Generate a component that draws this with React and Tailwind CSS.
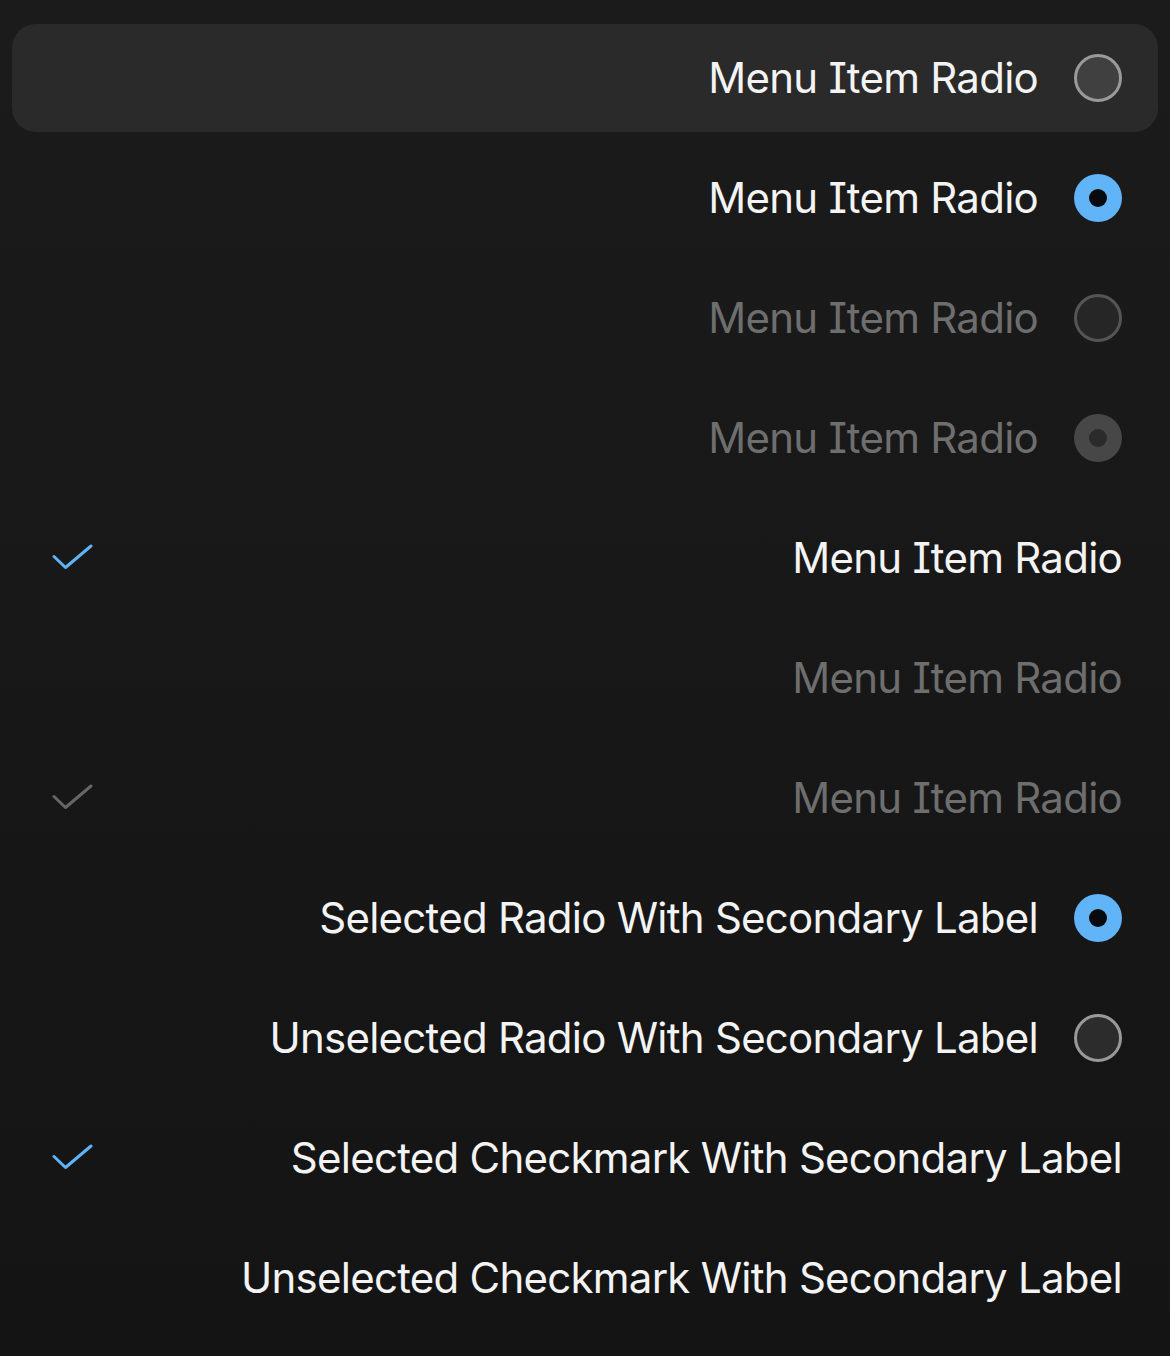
import { useState } from 'react';

// Radio indicator, 48px circle on the right side of a row
function Radio({ checked, disabled, hovered }) {
  if (checked) {
    return (
      <span
        className={`flex h-12 w-12 shrink-0 items-center justify-center rounded-full ${
          disabled ? 'bg-[#474747]' : 'bg-[#62b4f8]'
        }`}
      >
        <span className={`h-[18px] w-[18px] rounded-full ${disabled ? 'bg-[#2b2b2b]' : 'bg-[#070b10]'}`} />
      </span>
    );
  }
  return (
    <span
      className={`h-12 w-12 shrink-0 rounded-full border-[3px] ${
        disabled
          ? 'border-[#555555] bg-[#262626]'
          : hovered
          ? 'border-[#9a9a9a] bg-[#404040]'
          : 'border-[#999999] bg-[#2c2c2c]'
      }`}
    />
  );
}

function Check({ disabled }) {
  return (
    <svg width="42" height="28" viewBox="0 0 42 28" fill="none" className="shrink-0">
      <path
        d="M2 12.5 L13.5 23.5 L39 2"
        stroke={disabled ? '#666666' : '#5fb3f6'}
        strokeWidth="3"
        strokeLinecap="round"
        strokeLinejoin="round"
      />
    </svg>
  );
}

const items = [
  { label: 'Menu Item Radio', kind: 'radio', hovered: true },
  { label: 'Menu Item Radio', kind: 'radio', checked: true },
  { label: 'Menu Item Radio', kind: 'radio', disabled: true },
  { label: 'Menu Item Radio', kind: 'radio', checked: true, disabled: true },
  { label: 'Menu Item Radio', kind: 'check', checked: true },
  { label: 'Menu Item Radio', kind: 'check', disabled: true },
  { label: 'Menu Item Radio', kind: 'check', checked: true, disabled: true },
  { label: 'Selected Radio With Secondary Label', kind: 'radio', checked: true },
  { label: 'Unselected Radio With Secondary Label', kind: 'radio' },
  { label: 'Selected Checkmark With Secondary Label', kind: 'check', checked: true },
  { label: 'Unselected Checkmark With Secondary Label', kind: 'check' },
];

export default function App() {
  const [hover] = useState(0);

  return (
    <div
      className="flex min-h-screen flex-col gap-3 bg-gradient-to-b from-[#1b1b1b] to-[#141414] px-3 py-6"
      style={{ fontFamily: 'Inter, "Noto Sans", sans-serif' }}
    >
      {items.map((item, i) => (
        <div
          key={i}
          className={`flex h-[108px] items-center rounded-3xl pl-10 pr-9 ${
            i === hover ? 'bg-[#2a2a2a]' : ''
          }`}
        >
          <div className="w-[42px] shrink-0">
            {item.kind === 'check' && item.checked && <Check disabled={item.disabled} />}
          </div>
          <div className="flex flex-1 items-center justify-end gap-9">
            <span
              className={`text-[42px] leading-none tracking-[-0.75px] [font-feature-settings:'cv08'] ${
                item.disabled ? 'text-[#6e6e6e]' : 'text-[#f3f3f3]'
              }`}
            >
              {item.label}
            </span>
            {item.kind === 'radio' && (
              <Radio checked={item.checked} disabled={item.disabled} hovered={i === hover} />
            )}
          </div>
        </div>
      ))}
    </div>
  );
}
